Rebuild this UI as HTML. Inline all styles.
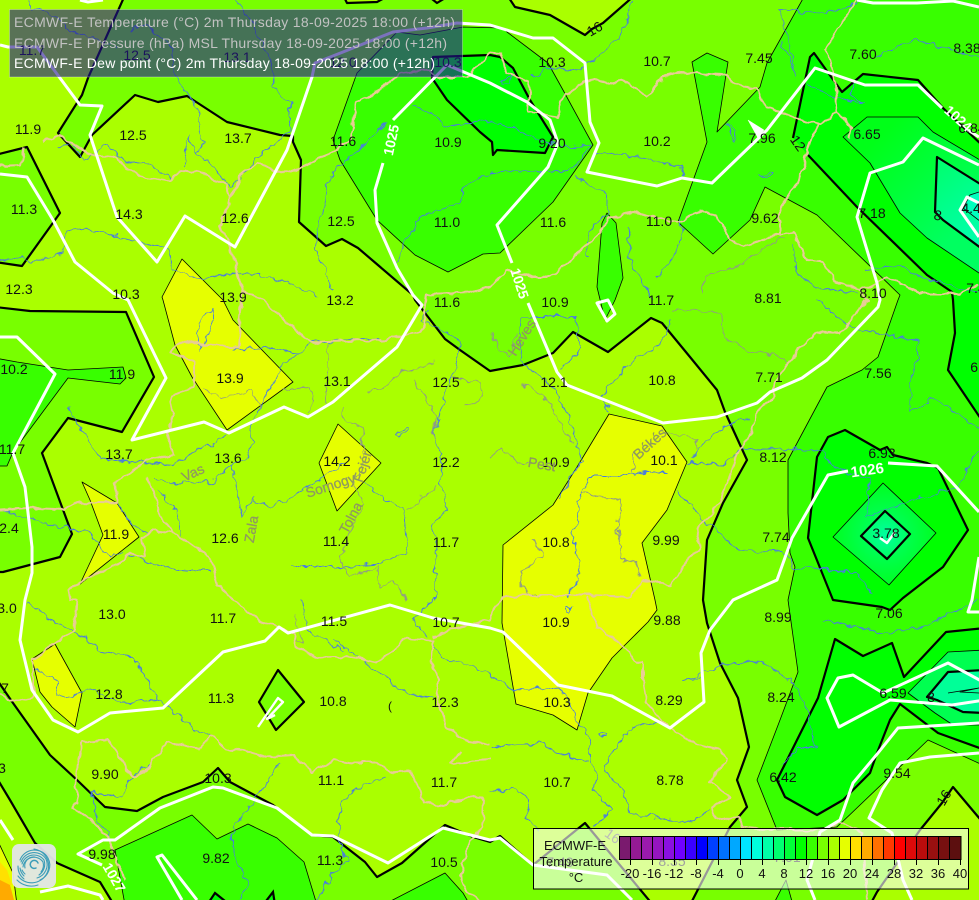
<!DOCTYPE html>
<html><head><meta charset="utf-8"><style>
html,body{margin:0;padding:0;background:#aaff00}
svg{display:block}
text{font-family:"Liberation Sans",sans-serif}
.l text{font-size:14px;fill:#111;text-anchor:middle}
.tn{stroke:#000;stroke-width:.8;stroke-linejoin:round}
.w polyline,.w polygon{fill:none;stroke:#fff;stroke-width:3;stroke-linejoin:round}
.b polyline{fill:none;stroke:#e8cc96;stroke-width:2;stroke-linejoin:round}
.r polyline{fill:none;stroke:#4a7ce0;stroke-width:.9;stroke-linejoin:round}
.g polyline{fill:none;stroke:#8f9a88;stroke-width:.9;stroke-linejoin:round}
.n text{font-size:14px;fill:#8f9a60;text-anchor:middle;stroke:#8f9a60;stroke-width:.3}
.c text{font-size:14px;fill:#fff;text-anchor:middle;font-weight:bold}
</style></head><body>
<svg width="979" height="900" viewBox="0 0 979 900" xmlns="http://www.w3.org/2000/svg">
<defs>
<linearGradient id="g1" gradientUnits="userSpaceOnUse" x1="875" y1="140" x2="960" y2="230"><stop offset="0" stop-color="#00ff18"/><stop offset="1" stop-color="#00ff60"/></linearGradient>
<linearGradient id="g2" gradientUnits="userSpaceOnUse" x1="940" y1="165" x2="985" y2="225"><stop offset="0" stop-color="#00ff70"/><stop offset="1" stop-color="#00ffa8"/></linearGradient>
<radialGradient id="g3" gradientUnits="userSpaceOnUse" cx="885" cy="535" r="52"><stop offset="0" stop-color="#00ff70"/><stop offset="1" stop-color="#00ff20"/></radialGradient>
<radialGradient id="g4" gradientUnits="userSpaceOnUse" cx="885" cy="535" r="24"><stop offset="0" stop-color="#00ffa0"/><stop offset="1" stop-color="#00ff60"/></radialGradient>
<filter id="wr" filterUnits="userSpaceOnUse" x="0" y="0" width="979" height="900" color-interpolation-filters="sRGB"><feTurbulence type="fractalNoise" baseFrequency="0.11" numOctaves="2" seed="4" result="n"/><feDisplacementMap in="SourceGraphic" in2="n" scale="9" xChannelSelector="R" yChannelSelector="G"/></filter>
<filter id="wb" filterUnits="userSpaceOnUse" x="0" y="0" width="979" height="900" color-interpolation-filters="sRGB"><feTurbulence type="fractalNoise" baseFrequency="0.09" numOctaves="2" seed="9" result="n"/><feDisplacementMap in="SourceGraphic" in2="n" scale="7" xChannelSelector="R" yChannelSelector="G"/></filter>
</defs>
<rect width="979" height="900" fill="#78ff00"/>

<!-- lime 16+ region -->
<polygon fill="#aaff00" stroke="#000" stroke-width="2.2" stroke-linejoin="round" points="-5,-5 125,-5 88,78 82,95 58,133 80,157 92,135 135,95 158,102 187,96 227,122 280,135 293,136 293,142 301,160 299,222 326,246 342,239 358,248 413,295 415,300 445,339 460,350 490,371 523,365 553,353 573,332 608,352 651,318 662,323 690,357 717,390 725,412 747,460 723,503 707,540 703,600 707,623 720,663 738,698 749,747 737,780 747,807 730,827 690,905 653,905 585,823 533,865 500,836 490,842 473,837 445,825 402,863 377,877 365,862 333,837 312,835 273,805 230,782 218,768 203,782 163,797 137,811 105,807 77,780 50,755 13,703 -5,677 -5,572 3,572 60,557 72,534 42,453 68,418 122,432 154,377 126,312 30,311 -5,307 -5,262 22,266 60,213 27,147 -5,155"/>
<polygon fill="#aaff00" stroke="#000" stroke-width="2.2" stroke-linejoin="round" points="507,-5 515,7 550,15 585,35 592,29 603,23 635,-5"/>
<polygon fill="#aaff00" stroke="#000" stroke-width="2.2" stroke-linejoin="round" points="343,-5 347,3 377,2 390,-5"/>
<polygon fill="#aaff00" stroke="#000" stroke-width="2.2" stroke-linejoin="round" points="427,-5 437,3 450,-5"/>
<polygon fill="#aaff00" stroke="#000" stroke-width="2.2" stroke-linejoin="round" points="953,787 985,825 985,905 870,905 877,892 920,830 942,803"/>
<polygon fill="#aaff00" stroke="#000" stroke-width="2.2" stroke-linejoin="round" points="-5,775 10,800 35,843 57,863 100,882 114,905 -5,905"/>
<polygon fill="#e6ff00" stroke="#000" stroke-width=".8" points="-5,835 13,873 17,905 -5,905"/>
<polygon fill="#ffe000" points="0,862 7,870 12,885 0,885"/>
<polygon fill="#ffaa00" points="0,880 10,885 14,900 0,900"/>

<!-- yellow 18+ -->
<g fill="#e6ff00" class="tn">
<polygon points="182,259 162,297 163,300 175,345 192,377 227,430 293,382 233,320 223,300 220,297"/>
<polygon points="82,482 117,503 139,537 80,584 103,535 90,500"/>
<polygon points="338,424 381,463 337,511 319,463"/>
<polygon points="609,414 662,426 687,462 667,510 642,543 655,600 657,610 648,622 612,658 588,693 577,730 553,715 516,704 502,623 503,545 553,505 577,467"/>
<polygon points="55,644 82,693 75,727 52,707 40,692 32,659"/>
</g>

<!-- 14 thin #38ff00 -->
<g fill="#38ff00" class="tn">
<polygon points="397,32 420,35 463,27 503,28 507,32 548,63 563,90 593,145 553,202 500,253 483,254 448,272 415,255 377,220 340,160 333,140 357,73"/>
<polygon points="692,62 707,53 728,62 717,132 760,87 767,63 805,-5 985,-5 985,766 928,740 837,827 777,830 757,780 780,720 798,672 788,600 795,567 790,553 788,513 788,460 827,387 862,370 878,357 898,300 900,295 817,215 765,187 750,220 713,254 678,222 707,142"/>
<polygon points="773,905 786,880 793,905"/>
<polygon points="-5,358 17,362 68,370 123,367 126,378 120,384 68,378 13,452 7,466 -5,466"/>
<polygon points="607,213 616,223 623,278 615,300 605,320 597,287 602,223"/>
<polygon points="115,850 192,815 217,839 248,824 277,838 304,862 317,905 125,905"/>
<polygon points="383,905 445,873 463,893 470,905"/>
</g>

<!-- 12 thick #00ff00 -->
<polygon points="433,57 490,55 500,57 513,68 530,100 553,137 545,153 497,150 493,155 492,142 480,132 447,100 432,78" fill="#00ff00" stroke="#000" stroke-width="2.2" stroke-linejoin="round"/>
<polyline points="793,138 810,57 814,53 842,92 863,74 918,80 943,108 985,148 985,425 948,370 955,333 953,300 952,292 927,275 857,207 808,155" fill="#00ff00" stroke="#000" stroke-width="2.2" stroke-linejoin="round"/>
<polygon points="828,437 845,430 880,450 887,447 893,455 927,463 938,468 968,530 943,567 903,598 890,610 882,607 833,600 808,538 817,457" fill="#00ff00" stroke="#000" stroke-width="2.2" stroke-linejoin="round"/>
<polygon points="835,639 863,656 892,643 904,677 946,632 985,628 985,750 938,733 900,704 890,720 877,753 870,773 843,800 817,815 785,797 777,780 818,698" fill="#00ff00" stroke="#000" stroke-width="2.2" stroke-linejoin="round"/>
<polygon points="207,905 215,893 230,905" fill="#00ff00" stroke="#000" stroke-width="2.2"/>
<polygon points="263,905 273,892 275,905" fill="#00ff00" stroke="#000" stroke-width="2.2"/>

<!-- diamond 16 -->
<polygon fill="#78ff00" stroke="#000" stroke-width="2.2" stroke-linejoin="round" points="278,670 304,702 276,730 259,702"/>

<!-- 10 thin -->
<polygon fill="url(#g1)" class="tn" points="843,137 867,117 888,117 918,117 933,132 985,163 985,277 927,238 900,213 870,163"/>
<polygon fill="url(#g3)" class="tn" points="883,483 936,533 889,585 833,537"/>
<polygon fill="#00ff50" class="tn" points="908,693 948,652 985,650 985,725 953,725 935,713"/>
<!-- 8 thick -->
<polygon fill="url(#g2)" stroke="#000" stroke-width="2.2" stroke-linejoin="round" points="937,157 985,187 985,251 943,220 935,212"/>
<polygon fill="#00ffbe" stroke="#000" stroke-width=".8" points="963,208 970,195 985,190 985,225"/>
<polygon fill="url(#g4)" stroke="#000" stroke-width="2.2" stroke-linejoin="round" points="885,511 910,534 887,559 861,536"/>
<polygon fill="#00ff98" stroke="#000" stroke-width="2.2" stroke-linejoin="round" points="927,697 948,672 985,670 985,713 963,712 937,700"/>
<polyline class="tn" fill="none" points="948,693 979,688 960,692 979,693"/>

<!-- rivers blue -->
<g class="r" filter="url(#wr)">
<polyline points="30,0 33,8 57,17 67,28 88,37 117,47"/>
<polyline points="128,30 143,23 170,45 177,80 197,107 200,133 203,143 197,155 188,135 183,167"/>
<polyline points="58,147 72,143 83,160 107,145 127,163 143,162 173,180"/>
<polyline points="197,155 207,160 230,187 263,153 280,140 290,130 290,103 273,85 273,67 253,23 235,0"/>
<polyline points="0,260 20,257 33,262 63,253 67,233 77,228 113,235 140,243 167,248 173,270 200,278 233,273 260,275 290,283 317,295"/>
<polyline points="333,170 327,187 315,247 323,267 333,290"/>
<polyline points="328,177 350,157 377,133 385,122"/>
<polyline points="397,263 403,247 420,217 460,203 463,187 490,175"/>
<polyline points="413,105 437,115 443,127 490,120 540,140 567,147 592,145 570,172 523,170 490,173"/>
<polyline points="597,153 633,155 663,163 682,165 683,180"/>
<polyline points="573,177 607,193 607,213 587,233 587,257"/>
<polyline points="532,78 547,68 580,70 597,57 622,37 627,20 633,0"/>
<polyline points="780,10 823,13 850,7 857,0"/>
<polyline points="780,43 790,60 797,75 780,10"/>
<polyline points="807,83 833,97 863,103 850,93 855,83"/>
<polyline points="877,57 910,40 953,50 979,60"/>
<polyline points="628,227 630,260 653,300"/>
<polyline points="657,277 673,257 682,233 680,217"/>
<polyline points="793,243 797,273 817,287 830,290 857,293"/>
<polyline points="867,270 903,267 920,277 979,293"/>
<polyline points="233,350 263,347 300,353 310,342 385,340"/>
<polyline points="300,353 283,363 275,380 260,407 250,427 252,443 248,458 233,463 242,517 253,498"/>
<polyline points="253,500 273,507 303,490 330,473 345,463"/>
<polyline points="227,433 213,443 197,450 173,465 147,463 100,460 83,430 68,407"/>
<polyline points="153,477 173,483 213,482 233,463"/>
<polyline points="157,490 177,513 180,537"/>
<polyline points="128,553 150,565 187,570 212,570"/>
<polyline points="0,510 60,527 87,530 110,557 123,553"/>
<polyline points="117,503 130,523 147,533"/>
<polyline points="293,567 340,567 383,563 407,553 403,507 390,503 363,483"/>
<polyline points="427,310 423,320 447,333 460,342 457,367 447,387 433,440 443,453 440,483 447,510 432,527 437,540 435,567 435,600 433,600 412,620 427,637"/>
<polyline points="430,643 443,657 490,673 513,690 560,687 583,730 590,743 590,760 598,780 592,790 613,810 593,827"/>
<polyline points="333,640 367,663 393,683 407,695 433,697"/>
<polyline points="300,600 307,630 343,650"/>
<polyline points="27,603 57,623 77,633 100,650 133,657 147,680 157,700 177,713 197,730 212,735"/>
<polyline points="33,670 57,680 57,693 72,697 90,688 117,703 157,700"/>
<polyline points="150,763 127,782 122,797 90,792 97,820 110,838"/>
<polyline points="280,763 257,797 233,827 233,853 248,883 240,900"/>
<polyline points="387,777 347,793 338,817 340,843 347,860 330,877 317,900"/>
<polyline points="657,722 633,727 613,750 605,770 623,790 630,813 690,823 710,810"/>
<polyline points="490,747 507,745 543,743 557,753 588,760"/>
<polyline points="490,792 513,788 530,800 525,817 540,830"/>
<polyline points="700,677 683,680 722,665 747,662 763,663 790,680 803,697 817,747 797,747 783,765"/>
<polyline points="823,620 890,633 923,627 979,600"/>
<polyline points="690,460 717,430 750,417"/>
<polyline points="687,463 723,465 743,448 823,450 830,467 870,480 867,517 903,503 957,487 979,447"/>
<polyline points="667,472 647,472 617,477 590,477 578,500 577,520 572,533 580,573 567,597"/>
<polyline points="677,490 700,517 717,530 737,550 783,552 795,567 857,573 873,593"/>
<polyline points="575,447 583,460 570,477 560,497"/>
<polyline points="610,413 600,397 630,363 657,347 667,333 670,317"/>
<polyline points="522,317 520,360 557,390 563,407 570,420 577,440 575,447"/>
<polyline points="522,317 577,317 580,350 560,370"/>
<polyline points="817,300 843,323 857,330 917,340 918,360 912,370 910,413 933,398 979,427"/>
<polygon points="197,333 205,313 213,310 213,323 200,350" fill="none" stroke="#4a7ce0" stroke-width=".9"/>
<polygon points="397,435 408,428 409,431 398,437" fill="none" stroke="#4a7ce0" stroke-width=".9"/>
<polygon points="727,123 735,132 735,141 731,138" fill="none" stroke="#4a7ce0" stroke-width=".9"/>
<polygon points="760,175 773,172 770,177 761,177" fill="none" stroke="#4a7ce0" stroke-width=".9"/>
<polygon points="500,82 513,75 510,84 502,85" fill="none" stroke="#4a7ce0" stroke-width=".9"/>
<polygon points="566,608 571,608 569,612 565,612" fill="none" stroke="#4a7ce0" stroke-width=".9"/>
<polygon points="600,735 606,733 605,737 600,737" fill="none" stroke="#4a7ce0" stroke-width=".9"/>
</g>

<!-- rivers grey -->
<g class="g" filter="url(#wr)">
<polyline points="203,389 223,397 250,390 260,407"/>
<polyline points="283,390 310,388 315,400 310,413"/>
<polyline points="328,343 328,380 325,402"/>
<polyline points="343,407 343,420 363,427 363,463 353,483 363,503 340,560 350,577 377,567 380,587 393,580 407,600"/>
<polyline points="367,390 383,388 400,373 413,370 433,363"/>
<polyline points="413,380 437,417 433,440"/>
<polyline points="453,377 480,383 483,397 463,407"/>
<polyline points="407,510 437,487"/>
<polyline points="490,333 500,350 510,357 518,333"/>
<polyline points="523,383 550,403 562,427 573,443"/>
<polyline points="490,457 503,447 517,463 533,463"/>
<polyline points="580,493 620,500 618,533 623,560 637,563 640,577"/>
<polyline points="533,540 543,557 520,570 520,587 540,597"/>
<polyline points="633,450 633,473"/>
<polyline points="662,430 697,440 697,450"/>
<polyline points="673,310 720,313 723,337 753,352 773,353 787,363"/>
<polyline points="703,277 743,263 783,237"/>
<polyline points="703,277 703,293"/>
<polyline points="293,637 303,643 295,617"/>
</g>

<!-- borders -->
<g class="b" filter="url(#wb)">
<polyline points="25,147 20,165 0,166"/>
<polyline points="43,142 59,136 80,147 90,155 113,157 140,177 170,182 180,170 200,173 227,185 230,200 240,177 257,163 277,170 293,172 317,160 333,150 350,140 357,103 383,87 400,73 425,70 440,77 467,77 490,52 500,53 507,72 530,83 528,112 557,117 565,95 587,80 607,83 623,80 647,97 663,77 682,72 723,75 737,85 757,88 765,107 797,118 820,125 837,112 835,83 827,50 837,30 857,0"/>
<polyline points="837,112 852,128 850,137"/>
<polyline points="818,125 810,142 798,183 780,208 780,233 743,247 730,240 717,217 703,210 677,222 633,212 607,218 600,233 567,263 550,277 533,277 507,270 490,287 470,293 427,295 424,312 425,330 383,340 310,342 287,323 263,300 243,290 230,247 220,227 230,200"/>
<polyline points="243,290 238,347 180,342 170,352 193,362 193,388 170,395 173,413 167,433 175,455 147,460 115,483 117,503 77,502 63,510 27,508 0,510"/>
<polyline points="147,477 157,500 160,517 173,533 153,530 142,537 145,557 130,553 120,563 83,580 68,590 70,600 77,600 75,630 55,643 33,660 33,697 12,702 0,693"/>
<polyline points="173,533 197,547 212,563 217,583 233,600 263,623 293,633 297,647 317,658 353,657 377,663 407,638 433,640 430,660 440,680 437,700 447,727 467,740 490,745"/>
<polyline points="433,637 460,627 490,620 490,615 503,598 523,595 590,595 630,597 643,580 672,585 687,560 700,547 697,530 720,503 730,477 737,455 753,430 757,413 773,397 772,388 792,357 818,332 840,333 850,320 867,300 860,290 887,278 920,293 960,293 979,285"/>
<polyline points="860,290 837,282 823,262 807,260 793,233 780,235"/>
<polyline points="587,597 597,627 623,647 637,663 643,660 643,680 647,703 657,717 677,733 697,745 720,750 727,760 710,782 730,797 712,808 717,820 737,817 743,827 773,830 823,830 840,822 863,833 867,900"/>
<polyline points="210,735 200,750 167,742 147,770 133,777 115,750 108,740 83,742 78,763 75,787 78,802 72,808 90,820 100,830 108,837 115,855 125,880"/>
<polyline points="210,735 227,750 250,752 267,757 293,755 313,772 333,760 353,763 377,763 390,772 410,770 420,790 423,803 443,805 467,797 483,798 482,827 470,843 460,877 467,893 480,900"/>
<polyline points="460,753 450,763 490,760"/>
</g>

<!-- white isobars -->
<g class="w">
<polyline points="0,45 8,47 37,47 80,105 102,106 90,135 117,217 157,262 185,216 235,247 287,150 312,77 315,63 343,52 393,32 427,28 457,23 490,25 533,38 553,38 585,63 590,122 599,143 587,172 657,186 682,178 712,183 767,130 815,68 865,85 918,85 942,108"/>
<polyline points="968,130 979,137"/>
<polyline points="393,120 447,65 490,83 527,102 550,120 558,143 548,167 497,225 512,263"/>
<polyline points="528,303 557,372 567,385 663,423 717,417 757,403 770,392 802,378 827,360 878,307 880,300 877,283 857,217 870,173 903,162 923,138 979,165"/>
<polyline points="383,163 375,190 377,223 397,268 413,295 422,305 397,347 333,402 308,417 284,407 229,433 204,422 132,440 166,378 128,300 113,293 75,262 53,220 27,177 0,174"/>
<polyline points="0,337 17,337 55,374 13,453 25,487 32,547 32,573 25,600 20,640 32,690 53,720 78,732 110,713 163,708 223,652 265,641 279,627 288,633 390,605 433,618 490,628 503,632 558,685 612,696 670,728 704,702 701,653 710,630 733,600 777,580 792,538 828,475 848,471"/>
<polyline points="888,463 937,466 979,512"/>
<polygon points="827,698 838,678 853,675 883,693 948,663 985,683 985,700 952,705 890,700 839,727"/>
<polyline points="979,723 898,728 878,753 853,783 840,820 820,832 807,880 815,900"/>
<polyline points="979,753 930,757 900,763 882,790 869,818 892,833 903,880 912,900"/>
<polyline points="102,865 78,854 103,840 115,840 160,808 213,787 223,788 277,808 312,835 333,836 388,863 443,828 490,840 500,838 533,865 607,875 632,900"/>
<polyline points="182,900 157,857 162,855 197,900"/>
<polyline points="40,892 68,886 100,895 103,900"/>
<polyline points="0,820 13,840"/>
<polyline points="258,727 278,698 283,702 267,719 275,715" style="stroke-width:2.4"/>
<polyline points="880,538 887,543 895,532" style="stroke-width:2.4"/>
<polygon points="748,120 764,130 758,138" style="fill:#fff;stroke-width:.5"/>
<polyline points="857,0 873,3 917,3 953,1 979,7"/>
<polyline points="80,0 88,2 103,0"/>
<polyline points="979,237 960,210 967,197 979,203"/>
<polyline points="979,557 972,600 968,612 979,612"/>
<polygon points="597,303 608,300 615,314 607,321"/>
</g>

<!-- corner logo -->
<rect x="12" y="844" width="44" height="44" rx="7" fill="#e4e6e8" fill-opacity=".95"/>
<g fill="none" stroke="#3d9db8" stroke-linecap="round">
<path d="M34 849 A17 17 0 1 1 18 876" stroke-width="1.1"/>
<path d="M20 860 A15.500 15.500 0 0 1 48 858 A16 16 0 0 1 40 880" stroke-width="1.1"/>
<path d="M21 862 A14 14 0 0 1 46 859 A14 14 0 0 1 37 878" stroke-width="1.1"/>
<path d="M22 864 A12.500 12.500 0 0 1 44 860 A13 13 0 0 1 39 875" stroke-width="1.1"/>
<path d="M23 867 A11 11 0 0 1 43 862 A11 11 0 0 1 41 872" stroke-width="1.1"/>
<path d="M25 868 A9 9 0 0 1 35 857" stroke-width="1.1"/>
<path d="M18 866 A16 16 0 0 0 24 879" stroke-width="1.1"/>
<path d="M20 868 A14 14 0 0 0 24 876" stroke-width="1.1"/>
<path d="M22 870 A12 12 0 0 0 25 874" stroke-width="1.1"/>
<path d="M36 868 A4 4 0 1 1 38 863" stroke-width="1.5"/>
<path d="M17 880 A20 20 0 0 0 38 885" stroke-width="1.1"/>
</g>

<!-- values -->
<g class="l">
<text x="32" y="55">11.7</text><text x="137" y="60">12.5</text><text x="237" y="62">13.1</text><text x="343" y="67">12.0</text><text x="448" y="67">10.3</text>
<text x="28" y="134">11.9</text><text x="133" y="140">12.5</text><text x="238" y="143">13.7</text><text x="343" y="146">11.6</text><text x="448" y="147">10.9</text>
<text x="24" y="214">11.3</text><text x="129" y="219">14.3</text><text x="235" y="223">12.6</text><text x="341" y="226">12.5</text><text x="447" y="227">11.0</text>
<text x="19" y="294">12.3</text><text x="126" y="299">10.3</text><text x="233" y="302">13.9</text><text x="340" y="305">13.2</text><text x="447" y="307">11.6</text>
<text x="552" y="67">10.3</text><text x="657" y="66">10.7</text><text x="759" y="63">7.45</text><text x="863" y="59">7.60</text><text x="967" y="53">8.38</text>
<text x="552" y="148">9.20</text><text x="657" y="146">10.2</text><text x="762" y="143">7.96</text><text x="867" y="139">6.65</text><text x="972" y="133">6.84</text>
<text x="553" y="227">11.6</text><text x="659" y="226">11.0</text><text x="765" y="223">9.62</text><text x="872" y="218">7.18</text><text x="975" y="213">4.41</text>
<text x="555" y="307">10.9</text><text x="661" y="305">11.7</text><text x="768" y="303">8.81</text><text x="873" y="298">8.10</text><text x="976" y="293">7.4</text>
<text x="14" y="374">10.2</text><text x="122" y="379">11.9</text><text x="230" y="383">13.9</text><text x="337" y="386">13.1</text><text x="446" y="387">12.5</text>
<text x="554" y="387">12.1</text><text x="662" y="385">10.8</text><text x="769" y="382">7.71</text><text x="878" y="378">7.56</text><text x="980" y="372">6.5</text>
<text x="12" y="454">11.7</text><text x="119" y="459">13.7</text><text x="228" y="463">13.6</text><text x="337" y="466">14.2</text><text x="446" y="467">12.2</text>
<text x="556" y="467">10.9</text><text x="664" y="465">10.1</text><text x="773" y="462">8.12</text><text x="882" y="458">6.93</text>
<text x="9" y="533">2.4</text><text x="116" y="539">11.9</text><text x="225" y="543">12.6</text><text x="336" y="546">11.4</text><text x="446" y="547">11.7</text>
<text x="556" y="547">10.8</text><text x="666" y="545">9.99</text><text x="776" y="542">7.74</text><text x="886" y="538">3.78</text>
<text x="7" y="613">3.0</text><text x="112" y="619">13.0</text><text x="223" y="623">11.7</text><text x="334" y="626">11.5</text><text x="446" y="627">10.7</text>
<text x="556" y="627">10.9</text><text x="667" y="625">9.88</text><text x="778" y="622">8.99</text><text x="889" y="618">7.06</text>
<text x="5" y="693">7</text><text x="109" y="699">12.8</text><text x="221" y="703">11.3</text><text x="333" y="706">10.8</text><text x="445" y="707">12.3</text>
<text x="557" y="707">10.3</text><text x="669" y="705">8.29</text><text x="781" y="702">8.24</text><text x="893" y="698">6.59</text>
<text x="2" y="773">3</text><text x="105" y="779">9.90</text><text x="218" y="783">10.3</text><text x="331" y="785">11.1</text><text x="444" y="787">11.7</text>
<text x="557" y="787">10.7</text><text x="670" y="785">8.78</text><text x="783" y="782">6.42</text><text x="897" y="778">9.54</text>
<text x="102" y="859">9.98</text><text x="216" y="863">9.82</text><text x="330" y="865">11.3</text><text x="444" y="867">10.5</text>
<text x="560" y="867">7.49</text><text x="672" y="866">8.35</text><text x="787" y="862">7.01</text>
<text x="390" y="710" style="font-size:12px">(</text>
</g>

<!-- contour labels -->
<g class="l">
<text transform="translate(597,33) rotate(-30)">16</text>
<text transform="translate(794,146) rotate(55)">12</text>
<text transform="translate(948,800) rotate(-60)">16</text>
<text transform="translate(610,840) rotate(35)" style="fill:#555">16</text>
<text transform="translate(937,220) rotate(10)">8</text>
<text x="931" y="702">8</text>
</g>
<g class="c">
<text transform="translate(396,141) rotate(-78)">1025</text>
<text transform="translate(515,285) rotate(72)">1025</text>
<text transform="translate(868,475) rotate(-8)" style="font-size:15px">1026</text>
<text transform="translate(955,122) rotate(42)">1024</text>
<text transform="translate(110,880) rotate(60)">1027</text>
</g>

<!-- place names -->
<g class="n">
<text transform="translate(195,477) rotate(-25)">Vas</text>
<text transform="translate(332,490) rotate(-18)">Somogy</text>
<text transform="translate(367,468) rotate(-72)">Fejér</text>
<text transform="translate(355,520) rotate(-62)">Tolna</text>
<text transform="translate(256,530) rotate(-80)">Zala</text>
<text transform="translate(541,469) rotate(10)">Pest</text>
<text transform="translate(653,447) rotate(-42)">Békés</text>
<text transform="translate(526,340) rotate(-58)">Heves</text>
</g>

<!-- legend -->
<rect x="533.500" y="828.500" width="435" height="60.500" fill="#fff" fill-opacity=".6" stroke="#000" stroke-width="1"/>
<g stroke="#000" stroke-width="1">
<rect x="619.500" y="836.500" width="11" height="23" fill="#7a1a6e"/><rect x="630.500" y="836.500" width="11" height="23" fill="#941a94"/><rect x="641.500" y="836.500" width="11" height="23" fill="#9a1aac"/><rect x="652.500" y="836.500" width="11" height="23" fill="#9515c0"/><rect x="663.500" y="836.500" width="11" height="23" fill="#8a10e0"/><rect x="674.500" y="836.500" width="11" height="23" fill="#7000ff"/><rect x="685.500" y="836.500" width="11" height="23" fill="#3a00ff"/><rect x="696.500" y="836.500" width="11" height="23" fill="#0000ff"/><rect x="707.500" y="836.500" width="11" height="23" fill="#0040ff"/><rect x="718.500" y="836.500" width="11" height="23" fill="#0070ff"/><rect x="729.500" y="836.500" width="11" height="23" fill="#00a8ff"/><rect x="740.500" y="836.500" width="11" height="23" fill="#00e5ff"/><rect x="751.500" y="836.500" width="11" height="23" fill="#00ffdd"/><rect x="762.500" y="836.500" width="11" height="23" fill="#00ffa8"/><rect x="773.500" y="836.500" width="11" height="23" fill="#00ff70"/><rect x="784.500" y="836.500" width="11" height="23" fill="#00ff38"/><rect x="795.500" y="836.500" width="11" height="23" fill="#00ff00"/><rect x="806.500" y="836.500" width="11" height="23" fill="#38ff00"/><rect x="817.500" y="836.500" width="11" height="23" fill="#78ff00"/><rect x="828.500" y="836.500" width="11" height="23" fill="#aaff00"/><rect x="839.500" y="836.500" width="11" height="23" fill="#e6ff00"/><rect x="850.500" y="836.500" width="11" height="23" fill="#ffe000"/><rect x="861.500" y="836.500" width="11" height="23" fill="#ffaa00"/><rect x="872.500" y="836.500" width="11" height="23" fill="#ff7000"/><rect x="883.500" y="836.500" width="11" height="23" fill="#ff3800"/><rect x="894.500" y="836.500" width="11" height="23" fill="#ff0000"/><rect x="905.500" y="836.500" width="11" height="23" fill="#dd0a0a"/><rect x="916.500" y="836.500" width="11" height="23" fill="#bb0c0c"/><rect x="927.500" y="836.500" width="11" height="23" fill="#991010"/><rect x="938.500" y="836.500" width="11" height="23" fill="#771010"/><rect x="949.500" y="836.500" width="11.500" height="23" fill="#5c0f0f"/>
<path d="M630.500 860v5M652.500 860v5M674.500 860v5M696.500 860v5M718.500 860v5M740.500 860v5M762.500 860v5M784.500 860v5M806.500 860v5M828.500 860v5M850.500 860v5M872.500 860v5M894.500 860v5M916.500 860v5M938.500 860v5M960.500 860v5" fill="none"/>
</g>
<g style="font-size:13px;fill:#111;text-anchor:middle">
<text x="630" y="878">-20</text><text x="652" y="878">-16</text><text x="674" y="878">-12</text><text x="696" y="878">-8</text><text x="718" y="878">-4</text><text x="740" y="878">0</text><text x="762" y="878">4</text><text x="784" y="878">8</text><text x="806" y="878">12</text><text x="828" y="878">16</text><text x="850" y="878">20</text><text x="872" y="878">24</text><text x="894" y="878">28</text><text x="916" y="878">32</text><text x="938" y="878">36</text><text x="960" y="878">40</text>
<text x="575" y="850">ECMWF-E</text><text x="576" y="866">Temperature</text><text x="576" y="882">°C</text>
</g>

<!-- title box -->
<rect x="9.500" y="9.500" width="453" height="67.500" fill="#231490" fill-opacity=".6" stroke="#fff" stroke-opacity=".3" stroke-width="1"/>
<text x="14" y="27" font-size="14" fill="#c2c2c2" textLength="441" lengthAdjust="spacing">ECMWF-E Temperature (°C) 2m Thursday 18-09-2025 18:00 (+12h)</text>
<text x="14" y="48" font-size="14" fill="#c2c2c2" textLength="433" lengthAdjust="spacing">ECMWF-E Pressure (hPa) MSL Thursday 18-09-2025 18:00 (+12h)</text>
<text x="14" y="68" font-size="14" fill="#ffffff" textLength="421" lengthAdjust="spacing">ECMWF-E Dew point (°C) 2m Thursday 18-09-2025 18:00 (+12h)</text>
</svg>
</body></html>
